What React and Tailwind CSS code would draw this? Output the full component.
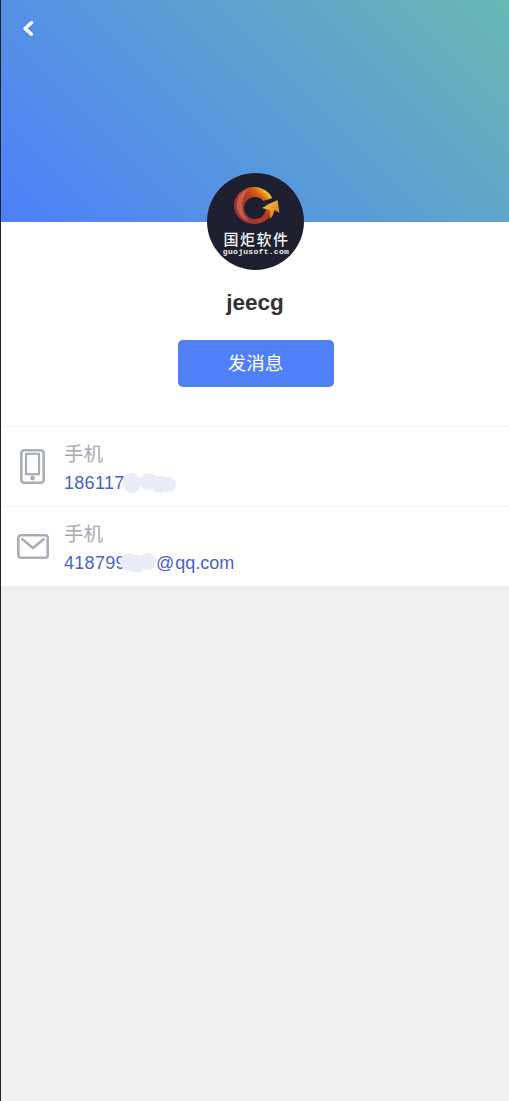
import React from 'react';

const Blob = ({ className }) => (
  <span className={`absolute rounded-full bg-[#e9ecf9] ${className}`} />
);

const Logo = () => (
  <div className="w-[97px] h-[97px] rounded-full bg-[#1e2030] flex flex-col items-center overflow-hidden">
    <svg viewBox="0 0 48 38" className="w-[48px] h-[38px] mt-[13px] ml-[4px] shrink-0">
      <defs>
        <linearGradient id="swirl" x1="0.1" y1="0.8" x2="0.85" y2="0.1">
          <stop offset="0" stopColor="#9c3530" />
          <stop offset="0.55" stopColor="#b83a22" />
          <stop offset="0.78" stopColor="#d9601c" />
          <stop offset="0.92" stopColor="#f0b52c" />
          <stop offset="1" stopColor="#fbe84e" />
        </linearGradient>
        <linearGradient id="arrow" x1="0" y1="0" x2="1" y2="1">
          <stop offset="0" stopColor="#f8dc45" />
          <stop offset="1" stopColor="#d9601c" />
        </linearGradient>
      </defs>
      <ellipse cx="21" cy="19.5" rx="20" ry="18.5" fill="url(#swirl)" />
      <path d="M16 3C8 5 4 12 4 19.5S9 33 16 35c-4-4-7-9-7-15.5S12 7 16 3z" fill="#d0705f" opacity="0.7" />
      <circle cx="22" cy="22" r="11" fill="#1e2030" />
      <path d="M24 17L46 10l0 4-16 6z" fill="#1e2030" />
      <path d="M29 22L44.5 14 46.5 27 41.5 24c-1 4-2 7-5 9 1-3 1-6 0-9z" fill="url(#arrow)" />
    </svg>
    <span className="font-['Noto_Sans_CJK_SC',sans-serif] font-medium text-[15px] leading-[14px] mt-[8px] ml-[3px] tracking-[1.5px] text-[#f2f2f2] whitespace-nowrap">国炬软件</span>
    <span className="font-['Liberation_Mono',monospace] font-bold text-[8px] leading-[8px] mt-[2px] ml-[2px] tracking-[0.3px] text-[#ececec] whitespace-nowrap">guojusoft.com</span>
  </div>
);

const PhoneIcon = () => (
  <svg viewBox="0 0 25 35" className="w-[25px] h-[35px]" fill="none" stroke="#a8adb8">
    <rect x="1.3" y="1.3" width="22.4" height="32.4" rx="3" strokeWidth="2.6" />
    <rect x="6" y="4.8" width="13" height="20.4" strokeWidth="2.2" />
    <circle cx="12.5" cy="29" r="2.4" fill="#a8adb8" stroke="none" />
  </svg>
);

const MailIcon = () => (
  <svg viewBox="0 0 32 25" className="w-[32px] h-[25px]" fill="none" stroke="#a8adb8" strokeWidth="2.6">
    <rect x="1.3" y="1.3" width="29.4" height="22.4" rx="2.5" />
    <path d="M4.5 4.5L16 14 27.5 4.5" />
  </svg>
);

const Row = ({ icon, value }) => (
  <div className="h-[80px] flex border-t border-[#f5f5f5] bg-white">
    <div className="w-[63px] shrink-0 flex items-center justify-center">{icon}</div>
    <div className="flex flex-col pt-[12px]">
      <span className="text-[19.5px] leading-[30px] mb-[1px] text-[#a9a9b0]">手机</span>
      <div className="text-[18px] leading-[26px] text-[#4663c9] relative">{value}</div>
    </div>
  </div>
);

export default function App() {
  return (
    <div className="min-h-[1101px] bg-[#f0f0f0] border-l border-[#222] font-['Liberation_Sans','Noto_Sans_CJK_SC',sans-serif]">
      <div className="h-[222px] bg-[linear-gradient(45deg,#4c80fc,#68b8b2)] pl-[17px] pt-[17px]">
        <svg viewBox="0 0 20 24" className="w-[20px] h-[24px]" fill="none" stroke="#fff" strokeWidth="3.4" strokeLinecap="round" strokeLinejoin="round">
          <path d="M13.5 5.7L7 11.5l6.5 5.8" />
        </svg>
      </div>
      <div className="bg-white flex flex-col items-center h-[204px]">
        <div className="-mt-[49px]">
          <Logo />
        </div>
        <div className="mt-[18px] text-[22.5px] leading-[30px] font-bold text-[#333]">jeecg</div>
        <button className="mt-[22px] ml-[1px] w-[156px] h-[47px] rounded-[5px] bg-[#4f80f9] text-white text-[18.5px]">发消息</button>
      </div>
      <Row
        icon={<PhoneIcon />}
        value={
          <>
            <span className="tracking-[0.3px]">186117</span>
            <Blob className="left-[59px] top-[3px] w-[18px] h-[20px]" />
            <Blob className="left-[76px] top-[3px] w-[18px] h-[17px]" />
            <Blob className="left-[87px] top-[6px] w-[17px] h-[17px]" />
            <Blob className="left-[96px] top-[7px] w-[16px] h-[15px]" />
          </>
        }
      />
      <Row
        icon={<MailIcon />}
        value={
          <>
            <span className="tracking-[0.3px]">418799</span><span className="invisible">999</span>
            <span>@</span><span className="ml-[1px]">qq.com</span>
            <Blob className="left-[56px] top-[3px] w-[18px] h-[18px]" />
            <Blob className="left-[64px] top-[5px] w-[18px] h-[18px]" />
            <Blob className="left-[76px] top-[3px] w-[16px] h-[17px]" />
          </>
        }
      />
    </div>
  );
}
